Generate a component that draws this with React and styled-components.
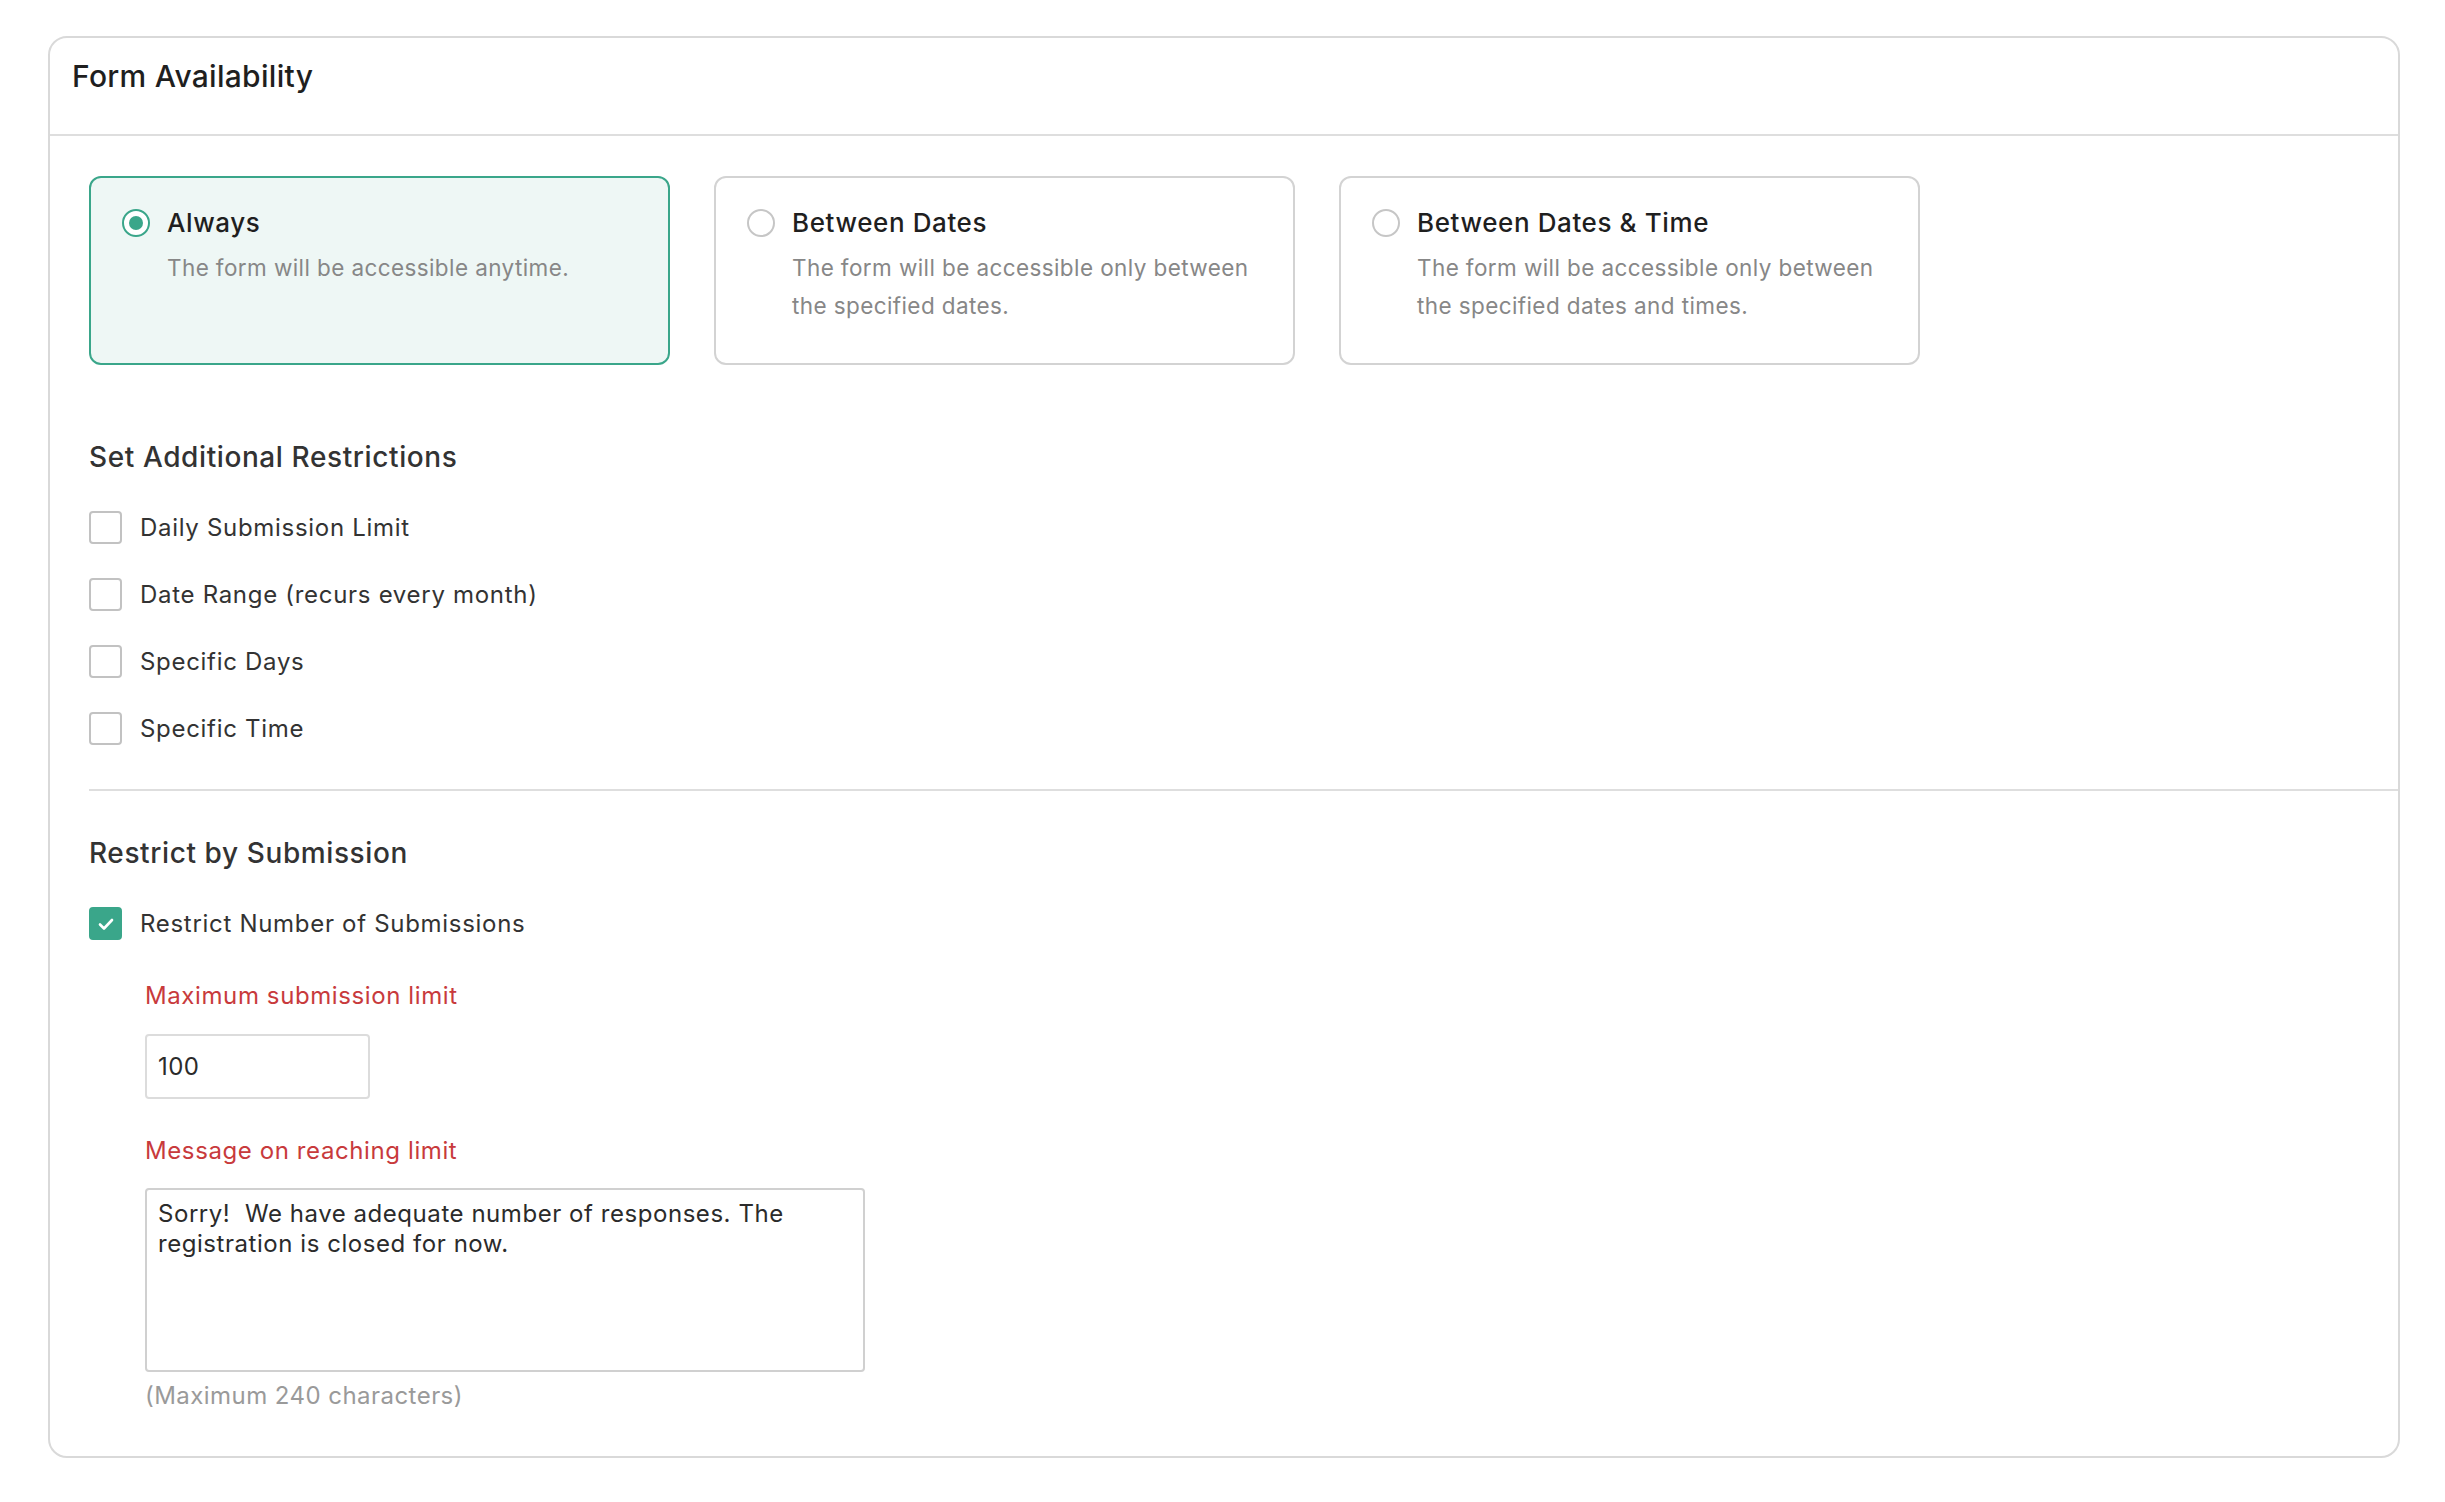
import React, { useState } from "react";
import styled, { createGlobalStyle } from "styled-components";

const GlobalStyle = createGlobalStyle`
  html, body {
    margin: 0;
    padding: 0;
    background: #fff;
  }
  body {
    font-family: Inter, "Noto Sans", "Liberation Sans", sans-serif;
    color: #2b2b2b;
  }
  * {
    box-sizing: border-box;
  }
`;

const Page = styled.div`
  padding: 36px 45px 40px 48px;
`;

const Card = styled.section`
  border: 2px solid #d9d9d9;
  border-radius: 19px;
  background: #fff;
`;

const CardHeader = styled.header`
  padding: 20px 22px 40px;
  border-bottom: 2px solid #dedede;
  h2 {
    margin: 0;
    font-size: 30px;
    line-height: 36px;
    font-weight: 500;
    color: #1f1f1f;
    letter-spacing: 0.3px;
  }
`;

const CardBody = styled.div`
  padding: 40px 0 45px 39px;
`;

const OptionRow = styled.div`
  display: flex;
  gap: 44px;
`;

const OptionCard = styled.label`
  width: 581px;
  height: 189px;
  border: 2px solid ${(p) => (p.$active ? "#3aa68a" : "#d3d3d3")};
  background: ${(p) => (p.$active ? "#eef7f5" : "#fff")};
  border-radius: 12px;
  padding: 28px 30px 0 31px;
  display: grid;
  grid-template-columns: 28px 1fr;
  align-content: start;
  column-gap: 17px;
  cursor: pointer;
`;

const Radio = styled.span`
  width: 28px;
  height: 28px;
  margin-top: 3px;
  border-radius: 50%;
  border: 2px solid ${(p) => (p.$active ? "#3aa68a" : "#c6c6c6")};
  background: #fff;
  display: flex;
  align-items: center;
  justify-content: center;
  &::after {
    content: "";
    width: 14px;
    height: 14px;
    border-radius: 50%;
    background: ${(p) => (p.$active ? "#3aa68a" : "transparent")};
  }
`;

const OptionTitle = styled.div`
  font-size: 26px;
  line-height: 34px;
  font-weight: 500;
  color: #1f1f1f;
  letter-spacing: 0.6px;
`;

const OptionDesc = styled.p`
  grid-column: 2;
  margin: 9px 0 0;
  font-size: 22.5px;
  line-height: 38px;
  color: #878787;
  letter-spacing: 0.4px;
`;

const SectionTitle = styled.h3`
  margin: ${(p) => p.$top || "74px"} 0 0;
  font-size: 28px;
  line-height: 36px;
  font-weight: 500;
  color: #333;
  letter-spacing: 0.6px;
`;

const CheckList = styled.div`
  display: flex;
  flex-direction: column;
  gap: 34px;
  margin-top: 36px;
`;

const CheckRow = styled.label`
  display: flex;
  align-items: center;
  gap: 18px;
  font-size: 24px;
  line-height: 33px;
  color: #333;
  letter-spacing: 0.7px;
  cursor: pointer;
`;

const Box = styled.span`
  width: 33px;
  height: 33px;
  flex: none;
  border-radius: 4px;
  border: 2px solid ${(p) => (p.$checked ? "#3aa68a" : "#c2c2c2")};
  background: ${(p) => (p.$checked ? "#3aa68a" : "#fff")};
  display: flex;
  align-items: center;
  justify-content: center;
`;

const Divider = styled.hr`
  margin: 44px 0 0;
  border: none;
  border-top: 2px solid #dedede;
`;

const Indent = styled.div`
  padding-left: 56px;
`;

const FieldLabel = styled.div`
  margin-top: ${(p) => p.$top};
  font-size: 24px;
  line-height: 30px;
  color: #c83a3c;
  letter-spacing: 0.6px;
`;

const NumberInput = styled.input`
  display: block;
  margin-top: 23px;
  width: 225px;
  height: 65px;
  border: 2px solid #dcdcdc;
  border-radius: 4px;
  padding: 0 11px;
  font-family: inherit;
  font-size: 24px;
  letter-spacing: 0.4px;
  color: #2b2b2b;
  outline: none;
`;

const MessageArea = styled.textarea`
  display: block;
  margin-top: 22px;
  width: 720px;
  height: 184px;
  border: 2px solid #d0d0d0;
  border-radius: 4px;
  padding: 9px 11px;
  font-family: inherit;
  font-size: 24px;
  line-height: 30px;
  letter-spacing: 0.55px;
  color: #2b2b2b;
  resize: none;
  outline: none;
`;

const Hint = styled.div`
  margin-top: 9px;
  font-size: 24px;
  line-height: 30px;
  color: #9a9a9a;
  letter-spacing: 0.45px;
`;

const options = [
  { id: "always", title: "Always", desc: "The form will be accessible anytime." },
  {
    id: "dates",
    title: "Between Dates",
    desc: "The form will be accessible only between the specified dates.",
  },
  {
    id: "datetime",
    title: "Between Dates & Time",
    desc: "The form will be accessible only between the specified dates and times.",
  },
];

const restrictions = [
  "Daily Submission Limit",
  "Date Range (recurs every month)",
  "Specific Days",
  "Specific Time",
];

const Check = () => (
  <svg width="20" height="20" viewBox="0 0 20 20" fill="none">
    <path
      d="M4 10.5l4 4L16 6"
      stroke="#fff"
      strokeWidth="2.6"
      strokeLinecap="round"
      strokeLinejoin="round"
    />
  </svg>
);

export default function App() {
  const [mode, setMode] = useState("always");
  const [checks, setChecks] = useState({});
  const [limitOn, setLimitOn] = useState(true);

  return (
    <>
      <GlobalStyle />
      <Page>
        <Card>
          <CardHeader>
            <h2>Form Availability</h2>
          </CardHeader>
          <CardBody>
            <OptionRow>
              {options.map((o) => (
                <OptionCard
                  key={o.id}
                  $active={mode === o.id}
                  onClick={() => setMode(o.id)}
                >
                  <Radio $active={mode === o.id} />
                  <OptionTitle>{o.title}</OptionTitle>
                  <OptionDesc>{o.desc}</OptionDesc>
                </OptionCard>
              ))}
            </OptionRow>

            <SectionTitle>Set Additional Restrictions</SectionTitle>
            <CheckList>
              {restrictions.map((r) => (
                <CheckRow
                  key={r}
                  onClick={() => setChecks({ ...checks, [r]: !checks[r] })}
                >
                  <Box $checked={!!checks[r]}>{checks[r] && <Check />}</Box>
                  {r}
                </CheckRow>
              ))}
            </CheckList>

            <Divider />

            <SectionTitle $top="44px">Restrict by Submission</SectionTitle>
            <CheckList>
              <CheckRow onClick={() => setLimitOn(!limitOn)}>
                <Box $checked={limitOn}>{limitOn && <Check />}</Box>
                Restrict Number of Submissions
              </CheckRow>
            </CheckList>

            <Indent>
              <FieldLabel $top="41px">Maximum submission limit</FieldLabel>
              <NumberInput type="text" defaultValue="100" />
              <FieldLabel $top="37px">Message on reaching limit</FieldLabel>
              <MessageArea defaultValue="Sorry!  We have adequate number of responses. The registration is closed for now." />
              <Hint>(Maximum 240 characters)</Hint>
            </Indent>
          </CardBody>
        </Card>
      </Page>
    </>
  );
}
